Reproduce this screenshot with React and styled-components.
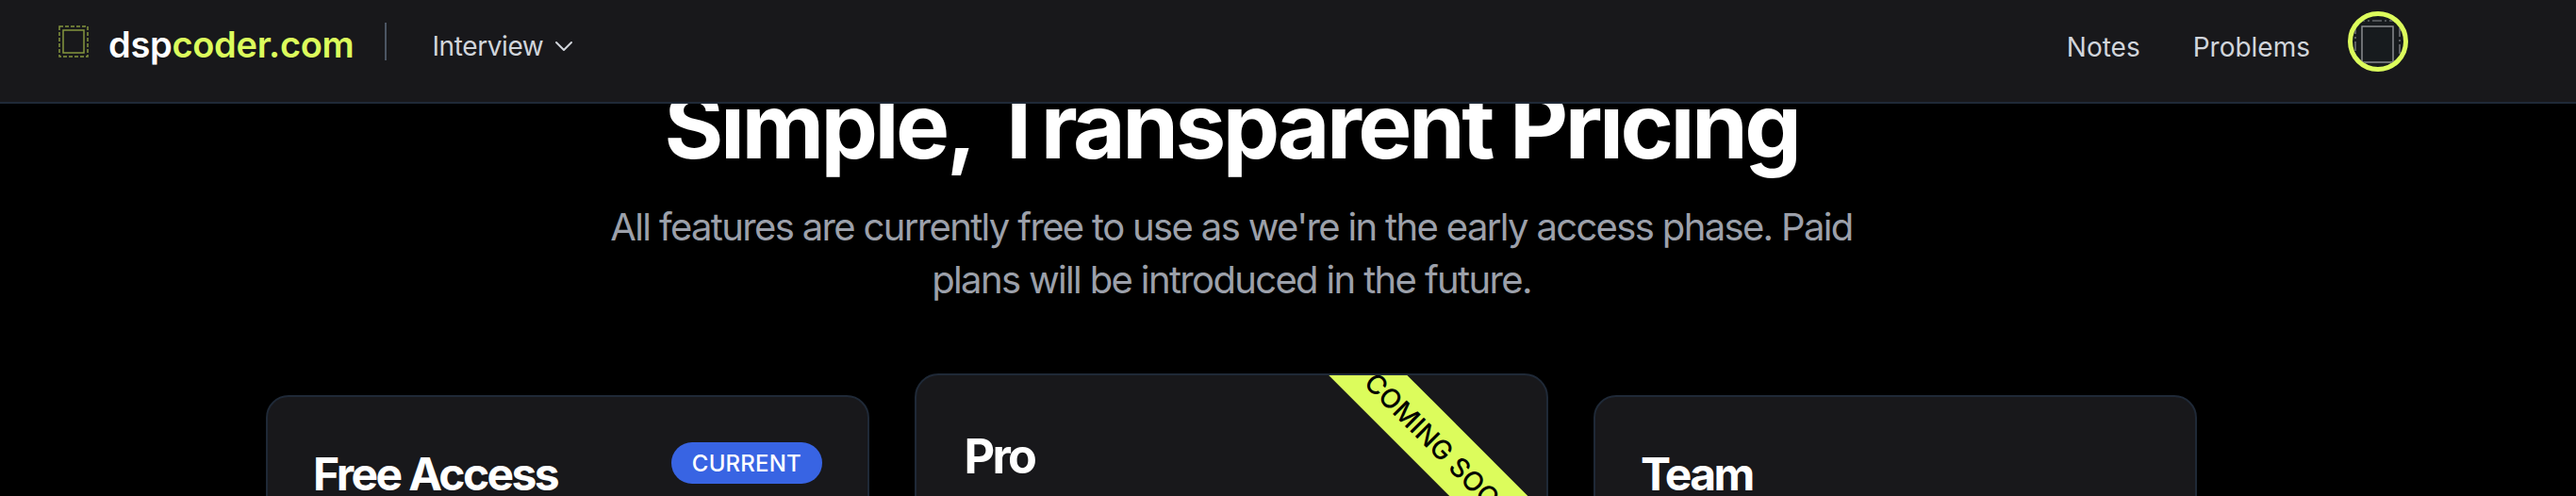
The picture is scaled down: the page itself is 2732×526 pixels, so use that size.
import React from 'react';
import styled, { createGlobalStyle } from 'styled-components';
import { ChevronDown } from 'lucide-react';

const lime = '#dcfc5c';

const Global = createGlobalStyle`
  html, body {
    margin: 0;
    background: #000;
    overflow: hidden;
    height: 526px;
    font-family: Inter, "Liberation Sans", sans-serif;
  }
`;

const Header = styled.header`
  position: relative;
  z-index: 10;
  height: 110px;
  box-sizing: border-box;
  display: flex;
  align-items: center;
  justify-content: space-between;
  padding: 0 178px 20px 62px;
  background: #18181b;
  border-bottom: 2px solid #1f2937;
`;

const Left = styled.div`
  display: flex;
  align-items: center;
`;

const Logo = styled.a`
  display: flex;
  align-items: center;
  gap: 21px;
  font-size: 38px;
  font-weight: 600;
  letter-spacing: -0.3px;
  color: #fff;
`;

const LogoText = styled.span`
  padding-top: 5px;
`;

const Accent = styled.span`
  color: ${lime};
`;

const Divider = styled.div`
  width: 2px;
  height: 40px;
  background: #4b5563;
  margin: 0 48px 0 33px;
`;

const NavItem = styled.a`
  display: flex;
  align-items: center;
  gap: ${p => (p.$low ? '0' : '6px')};
  padding-top: ${p => (p.$low ? '12px' : '9px')};
  font-size: 28px;
  letter-spacing: ${p => (p.$low ? '0' : '-0.4px')};
  color: #d1d5db;
`;

const Right = styled.nav`
  display: flex;
  align-items: center;
  gap: 56px;
`;

const Avatar = styled.div`
  width: 64px;
  height: 64px;
  box-sizing: border-box;
  margin-left: -16px;
  border: 5px solid ${lime};
  border-radius: 50%;
  overflow: hidden;
  background: #171b1e;
`;

const Main = styled.main`
  width: 2612px;
  margin-top: -25px;
  display: flex;
  flex-direction: column;
  align-items: center;
`;

const Title = styled.h1`
  margin: 0;
  font-size: 96px;
  line-height: 96px;
  font-weight: 700;
  letter-spacing: -3.5px;
  color: #fff;
`;

const Subtitle = styled.p`
  margin: 32px 0 0;
  width: 1344px;
  font-size: 40px;
  line-height: 56px;
  letter-spacing: -1.65px;
  text-align: center;
  color: #9ca0aa;
`;

const Cards = styled.div`
  margin-top: 94px;
  display: grid;
  grid-template-columns: repeat(3, 640px);
  gap: 64px;
`;

const Card = styled.section`
  position: relative;
  height: 920px;
  box-sizing: border-box;
  padding: 48px;
  background: #18181b;
  border: 2px solid #1f2937;
  border-radius: 24px;
  overflow: hidden;
  transform: ${p => (p.$featured ? 'scale(1.05)' : 'none')};
`;

const CardHead = styled.div`
  display: flex;
  align-items: flex-start;
  justify-content: space-between;
`;

const CardTitle = styled.h2`
  margin: 0;
  padding-top: 2px;
  font-size: 48px;
  line-height: 64px;
  font-weight: 700;
  letter-spacing: -2.6px;
  color: #fff;
`;

const Badge = styled.span`
  height: 44px;
  padding: 0 22px;
  display: flex;
  align-items: center;
  border-radius: 22px;
  background: #3864e3;
  color: #fff;
  font-size: 24px;
  font-weight: 500;
  letter-spacing: 0.2px;
`;

const Ribbon = styled.div`
  position: absolute;
  top: 62px;
  right: -150px;
  width: 480px;
  height: 56px;
  box-sizing: border-box;
  padding-right: 50px;
  display: flex;
  align-items: center;
  justify-content: center;
  transform: rotate(45deg);
  background: ${lime};
  color: #000;
  font-size: 27px;
  font-weight: 500;
`;

const LogoMark = () => (
  <svg width="32" height="34" viewBox="0 0 32 34" fill="none" stroke={lime} strokeOpacity="0.55">
    <rect x="1" y="1" width="30" height="32" strokeWidth="1.5" strokeDasharray="4 2" />
    <rect x="5" y="5" width="22" height="24" strokeWidth="1.5" />
  </svg>
);

const BrokenImage = () => (
  <svg width="54" height="54" viewBox="0 0 54 54" fill="none" stroke="#8a8d90">
    <rect x="10" y="11" width="33" height="38" strokeWidth="1.5" />
    <rect x="3" y="5" width="47" height="50" strokeWidth="1.2" strokeDasharray="10 3 2 3" />
  </svg>
);

export default function App() {
  return (
    <>
      <Global />
      <Header>
        <Left>
          <Logo>
            <LogoMark />
            <LogoText>dsp<Accent>coder.com</Accent></LogoText>
          </Logo>
          <Divider />
          <NavItem>Interview <ChevronDown size={32} strokeWidth={1.5} /></NavItem>
        </Left>
        <Right>
          <NavItem $low>Notes</NavItem>
          <NavItem $low>Problems</NavItem>
          <Avatar><BrokenImage /></Avatar>
        </Right>
      </Header>
      <Main>
        <Title>Simple, Transparent Pricing</Title>
        <Subtitle>All features are currently free to use as we're in the early access phase. Paid plans will be introduced in the future.</Subtitle>
        <Cards>
          <Card>
            <CardHead>
              <CardTitle>Free Access</CardTitle>
              <Badge>CURRENT</Badge>
            </CardHead>
          </Card>
          <Card $featured>
            <Ribbon>COMING SOON</Ribbon>
            <CardHead>
              <CardTitle>Pro</CardTitle>
            </CardHead>
          </Card>
          <Card>
            <CardHead>
              <CardTitle>Team</CardTitle>
            </CardHead>
          </Card>
        </Cards>
      </Main>
    </>
  );
}
